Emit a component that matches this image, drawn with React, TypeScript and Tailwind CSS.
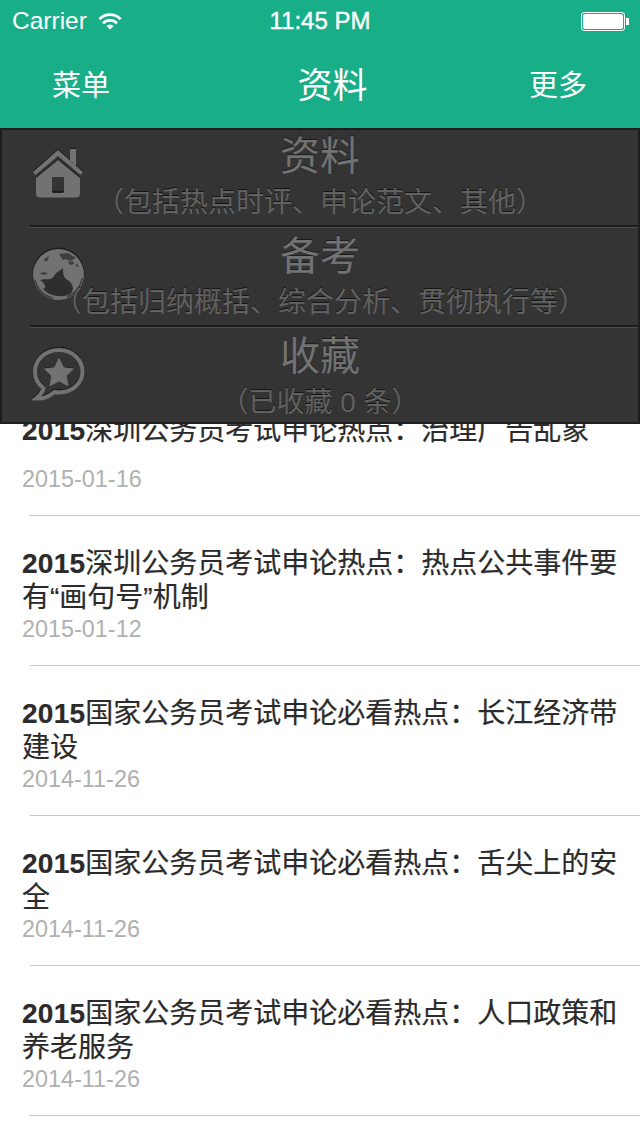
const cjk = "font-['Liberation_Sans','Noto_Sans_CJK_SC',sans-serif]";

const rows = [
  { t: "2015深圳公务员考试申论热点：治理广告乱象", d: "2015-01-16" },
  { t: "2015深圳公务员考试申论热点：热点公共事件要有“画句号”机制", d: "2015-01-12" },
  { t: "2015国家公务员考试申论必看热点：长江经济带建设", d: "2014-11-26" },
  { t: "2015国家公务员考试申论必看热点：舌尖上的安全", d: "2014-11-26" },
  { t: "2015国家公务员考试申论必看热点：人口政策和养老服务", d: "2014-11-26" },
];

const G = "#727272";
const D = "#1d1d1d";

function Home() {
  const shape = (fill: string) => (
    <g fill={fill}>
      <path d="M38 2h6v17l-6-5.500z" />
      <path d="M26 3 1 25l2.500 3L26 9l22.500 19 2.500-3z" />
      <path fillRule="evenodd" d="M26 13 4 31v15q0 4.500 4.500 4.500h35Q48 50.500 48 46V31zM20 30h12v15H20z" />
    </g>
  );
  return (
    <svg width="54" height="54" viewBox="0 0 54 54">
      <g transform="translate(0,-1.2)">{shape(D)}</g>
      {shape(G)}
      <path d="M20.500 44.500h11v1.500h-11z" fill={D} />
    </svg>
  );
}

function Globe() {
  return (
    <svg width="54" height="54" viewBox="0 0 54 54" fill="none">
      <circle cx="26.500" cy="26.500" r="26" fill={D} />
      <circle cx="26.500" cy="27.500" r="25.500" fill={G} />
      <path
        d="M8 33C14 31 19 34 22 29 24 25 28 24 31 21 31 25 31 29 34 32 38 34 41 37 41 42 40 46 38 47 36 48 27 51 16 48 11 42 15 41 13 36 8 33z"
        fill="#2e2e2e"
      />
      <path d="M27 7l9-1 8 5-6 3-4-2-3 1zM36 15l5-1 1 3-4 1zM12 12l5-3-1 4-3 2zM8 26l5-1 3 2-6 1zM44 16l3 3-3 1z" fill="#3e3e3e" />
      <path d="M50 31c-1 9-7 16-15 19M3 33c2 9 9 16 18 18" stroke="#3e3e3e" strokeWidth="1.500" />
    </svg>
  );
}

function Chat() {
  const bubble = "M27 3C13.500 3 3 12.500 3 24.500c0 6.500 3 12.500 8.500 16.500-1 4-3.500 7.500-7.500 10.500 7 .5 14-2.500 18.500-6.500 1.500.3 3 .5 4.500.5 13.500 0 23.500-9.500 23.500-21S40.500 3 27 3z";
  const star = "M27 11.500l4.500 9.200 9.800 1.300-7.200 6.800 1.900 9.900-9-4.800-9 4.800 1.900-9.900-7.200-6.800 9.800-1.300z";
  return (
    <svg width="54" height="56" viewBox="0 0 54 56" fill="none">
      <path d={bubble} stroke={D} strokeWidth="4" transform="translate(0,-1.200)" />
      <path d={star} fill={D} transform="translate(0,-1.200)" />
      <path d={bubble} stroke={G} strokeWidth="4" />
      <path d={star} fill={G} strokeLinejoin="round" stroke={G} strokeWidth="1" />
    </svg>
  );
}

function MenuRow({ icon, title, sub, h }: { icon: React.ReactNode; title: string; sub: string; h: string }) {
  return (
    <div className={`relative flex flex-col items-center ${h}`}>
      <div className="absolute left-[30px] top-[19px]">{icon}</div>
      <div className="relative text-[40px] leading-[56px] text-[#727272] [text-shadow:0_-1px_0_#1c1c1c]">{title}</div>
      <div className="relative mt-[1px] text-[28px] leading-[36px] text-[#616161] [text-shadow:0_-1px_0_#151515] whitespace-nowrap">{sub}</div>
    </div>
  );
}

export default function App() {
  return (
    <div className={`relative w-[640px] h-[1136px] bg-white overflow-hidden ${cjk}`}>
      <header className="bg-[#18ae88] h-[128px] text-white flex flex-col">
        <div className="h-[42px] pl-[12px] pr-[11px] flex items-center justify-between relative">
          <div className="flex items-center gap-[11px]">
            <span className="text-[24.500px] leading-none">Carrier</span>
            <svg width="24" height="19" viewBox="0 0 26 20" fill="none" stroke="#fff" strokeWidth="3">
              <path d="M1.500 7.500a16 16 0 0 1 23 0" />
              <path d="M5.500 12a10.500 10.500 0 0 1 15 0" />
              <path d="M13 19l-3.800-4a5 5 0 0 1 7.600 0z" fill="#fff" stroke="none" />
            </svg>
          </div>
          <span className="absolute left-0 right-0 text-center text-[24px] leading-none [-webkit-text-stroke:0.4px_#fff]">11:45 PM</span>
          <div className="flex items-center">
            <div className="w-[44px] h-[19px] rounded-[3px] border border-white p-[1px]">
              <div className="w-full h-full bg-white rounded-[2px]" />
            </div>
            <div className="w-[3px] h-[7px] bg-white ml-[1px]" />
          </div>
        </div>
        <div className="flex-1 flex items-center justify-between pl-[52px] pr-[53px] pt-[3px] text-[29px]">
          <span>菜单</span>
          <span className="text-[35px] ml-[26px]">资料</span>
          <span>更多</span>
        </div>
      </header>

      <main className="pt-[238px]">
        {rows.map((r) => (
          <div key={r.t}>
            <div className="h-[149px] pt-[31px] pl-[22px] pr-[20px]">
              <div className="h-[68px] flex items-center text-[28px] leading-[34px] text-[#2b2b2b] [-webkit-text-stroke:0.2px_#2b2b2b]">
                <div><b className="font-bold tracking-[0.25px]">{r.t.slice(0, 4)}</b>{r.t.slice(4)}</div>
              </div>
              <div className="-mt-[2px] text-[23.400px] leading-[32px] text-[#b0b0b0]">{r.d}</div>
            </div>
            <div className="ml-[30px] h-px bg-[#c8c8c8]" />
          </div>
        ))}
      </main>

      <nav className="absolute left-0 right-0 top-[128px] h-[296px] bg-[#343434] border-2 border-[#1e1e1e]">
        <MenuRow h="h-[97px] -mt-[2px]" icon={<Home />} title="资料" sub="（包括热点时评、申论范文、其他）" />
        <div className="ml-[28px] h-[2px] bg-[#1c1c1c]" />
        <div className="ml-[28px] h-px bg-[#4c4c4c]" />
        <MenuRow h="h-[97px]" icon={<Globe />} title="备考" sub="（包括归纳概括、综合分析、贯彻执行等）" />
        <div className="ml-[28px] h-[2px] bg-[#1c1c1c]" />
        <div className="ml-[28px] h-px bg-[#4c4c4c]" />
        <MenuRow h="h-[94px]" icon={<Chat />} title="收藏" sub="（已收藏 0 条）" />
      </nav>
    </div>
  );
}
